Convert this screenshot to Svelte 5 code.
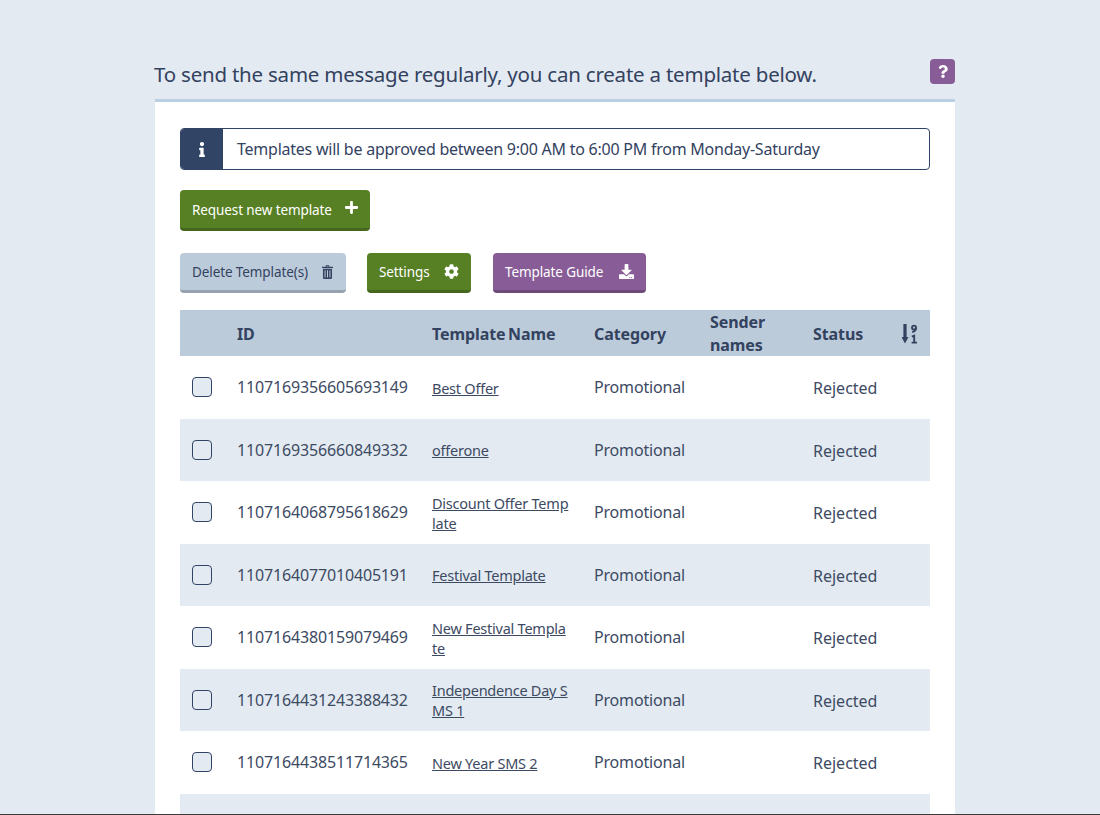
<script>
  const rows = [
    ['1107169356605693149', 'Best Offer'],
    ['1107169356660849332', 'offerone'],
    ['1107164068795618629', 'Discount Offer Template'],
    ['1107164077010405191', 'Festival Template'],
    ['1107164380159079469', 'New Festival Template'],
    ['1107164431243388432', 'Independence Day SMS 1'],
    ['1107164438511714365', 'New Year SMS 2'],
    ['', '']
  ];
</script>

<div class="page">
  <main class="main">
    <div class="wrap">
      <header class="head">
        <h1>To send the same message regularly, you can create a template below.</h1>
        <button class="help" aria-label="Help">
          <svg viewBox="0 0 384 512" width="10" height="13"><path fill="currentColor" d="M202.021 0C122.202 0 70.503 32.703 29.914 91.026c-7.363 10.58-5.093 25.086 5.178 32.874l43.138 32.709c10.373 7.865 25.132 6.026 33.253-4.148 25.049-31.381 43.63-49.449 82.757-49.449 30.764 0 68.816 19.799 68.816 49.631 0 22.552-18.617 34.134-48.993 51.164-35.423 19.86-82.299 44.576-82.299 106.405V320c0 13.255 10.745 24 24 24h72.471c13.255 0 24-10.745 24-24v-5.773c0-42.86 125.268-44.645 125.268-160.627C377.504 66.256 286.902 0 202.021 0zM192 373.459c-38.196 0-69.271 31.075-69.271 69.271 0 38.195 31.075 69.27 69.271 69.27s69.271-31.075 69.271-69.271-31.075-69.27-69.271-69.27z"/></svg>
        </button>
      </header>

      <section class="panel">
        <div class="info">
          <span class="info-icon">
            <svg viewBox="0 0 192 512" width="6" height="15"><path fill="currentColor" d="M20 424.229h20V279.771H20c-11.046 0-20-8.954-20-20V212c0-11.046 8.954-20 20-20h112c11.046 0 20 8.954 20 20v212.229h20c11.046 0 20 8.954 20 20V492c0 11.046-8.954 20-20 20H20c-11.046 0-20-8.954-20-20v-47.771c0-11.046 8.954-20 20-20zM96 0C56.235 0 24 32.235 24 72s32.235 72 72 72 72-32.235 72-72S135.764 0 96 0z"/></svg>
          </span>
          <span class="info-text">Templates will be approved between 9:00 AM to 6:00 PM from Monday-Saturday</span>
        </div>

        <div class="actions first">
          <button class="btn green request">
            <span>Request new template</span>
            <svg class="up" viewBox="0 0 448 512" width="13" height="15"><path fill="currentColor" d="M416 208H272V64c0-17.67-14.33-32-32-32h-32c-17.67 0-32 14.33-32 32v144H32c-17.67 0-32 14.33-32 32v32c0 17.67 14.33 32 32 32h144v144c0 17.67 14.33 32 32 32h32c17.67 0 32-14.33 32-32V304h144c17.67 0 32-14.33 32-32v-32c0-17.67-14.33-32-32-32z"/></svg>
          </button>
        </div>

        <div class="actions second">
          <button class="btn grey delete">
            <span>Delete Template(s)</span>
            <svg class="trash" viewBox="0 0 448 512" width="11" height="14" preserveAspectRatio="none"><path fill="currentColor" fill-rule="evenodd" d="M40 140h368v324a48 48 0 0 1-48 48H88a48 48 0 0 1-48-48zM104 190h40v270h-40zM204 190h40v270h-40zM304 190h40v270h-40zM0 64h448v50H0zM130 70L160 6h128l30 64h-50L258 46h-68l-10 24z"/></svg>
          </button>
          <button class="btn green settings">
            <span>Settings</span>
            <svg viewBox="0 0 512 512" width="15" height="15"><path fill="currentColor" d="M487.4 315.7l-42.6-24.6c4.3-23.2 4.3-47 0-70.2l42.6-24.6c4.9-2.8 7.1-8.6 5.5-14-11.1-35.6-30-67.8-54.7-94.6-3.8-4.1-10-5.1-14.8-2.3L380.8 110c-17.9-15.4-38.5-27.3-60.8-35.1V25.8c0-5.6-3.9-10.5-9.4-11.7-36.7-8.2-74.3-7.8-109.2 0-5.5 1.2-9.4 6.1-9.4 11.7V75c-22.2 7.9-42.8 19.8-60.8 35.1L88.7 85.5c-4.9-2.8-11-1.9-14.8 2.3-24.7 26.7-43.6 58.9-54.7 94.6-1.7 5.4.6 11.2 5.5 14L67.3 221c-4.3 23.2-4.3 47 0 70.2l-42.6 24.6c-4.9 2.8-7.1 8.6-5.5 14 11.1 35.6 30 67.8 54.7 94.6 3.8 4.1 10 5.1 14.8 2.3l42.6-24.6c17.9 15.4 38.5 27.3 60.8 35.1v49.2c0 5.6 3.9 10.5 9.4 11.7 36.7 8.2 74.3 7.8 109.2 0 5.5-1.2 9.4-6.1 9.4-11.7v-49.2c22.2-7.9 42.8-19.8 60.8-35.1l42.6 24.6c4.9 2.8 11 1.9 14.8-2.3 24.7-26.7 43.6-58.9 54.7-94.6 1.5-5.5-.7-11.3-5.6-14.1zM256 336c-44.1 0-80-35.9-80-80s35.9-80 80-80 80 35.9 80 80-35.9 80-80 80z"/></svg>
          </button>
          <button class="btn purple guide">
            <span>Template Guide</span>
            <svg viewBox="0 0 512 512" width="15" height="15"><path fill="currentColor" d="M216 0h80c13.3 0 24 10.7 24 24v168h87.7c17.8 0 26.7 21.5 14.1 34.1L269.7 378.3c-7.5 7.5-19.8 7.5-27.3 0L90.1 226.1c-12.6-12.6-3.7-34.1 14.1-34.1H192V24c0-13.3 10.7-24 24-24zm296 376v112c0 13.3-10.7 24-24 24H24c-13.3 0-24-10.7-24-24V376c0-13.3 10.7-24 24-24h146.7l49 49c20.1 20.1 52.5 20.1 72.6 0l49-49H488c13.3 0 24 10.7 24 24zm-124 88c0-11-9-20-20-20s-20 9-20 20 9 20 20 20 20-9 20-20zm64 0c0-11-9-20-20-20s-20 9-20 20 9 20 20 20 20-9 20-20z"/></svg>
          </button>
        </div>

        <table class="table">
          <colgroup>
            <col class="c-check" /><col class="c-id" /><col class="c-name" /><col class="c-cat" /><col class="c-send" /><col class="c-status" />
          </colgroup>
          <thead>
            <tr>
              <th></th>
              <th><div class="th-in">ID</div></th>
              <th><div class="th-in">Template Name</div></th>
              <th><div class="th-in">Category</div></th>
              <th><div class="th-in">Sender names</div></th>
              <th>
                <div class="th-in status-head">
                  <span>Status</span>
                  <svg viewBox="0 0 16 20" width="16" height="20">
                    <path fill="currentColor" d="M1.4 0h3.2v13h1.9L3 19.5-.5 13h1.9z"/>
                    <g fill="none" stroke="currentColor" stroke-width="1.9">
                      <circle cx="12" cy="3.6" r="2"/>
                      <path d="M14 4C14 6.3 12.6 7.5 10.2 8"/>
                      <path d="M9.8 12.6L12.2 11.6V18.4M9.6 18.6H15"/>
                    </g>
                  </svg>
                </div>
              </th>
            </tr>
          </thead>
          <tbody>
            {#each rows as [id, name]}
              <tr>
                <td>{#if id}<input type="checkbox" class="check" aria-label="Select template" />{/if}</td>
                <td class="id">{id}</td>
                <td class="name">{#if name}<a href="#top">{name}</a>{/if}</td>
                <td class="cat">{id ? 'Promotional' : ''}</td>
                <td></td>
                <td class="status">{id ? 'Rejected' : ''}</td>
              </tr>
            {/each}
          </tbody>
        </table>
      </section>
    </div>
  </main>
  <footer class="foot"></footer>
</div>

<style>
  :global(body) {
    margin: 0;
    background: #e3eaf1;
    font-family: "Noto Sans", "Open Sans", sans-serif;
    color: #33425f;
  }
  .page {
    height: 815px;
    display: flex;
    flex-direction: column;
    overflow: hidden;
  }
  .main {
    flex: 1;
    min-height: 0;
    overflow: hidden;
    display: flex;
    justify-content: center;
    padding: 59px 0 0 10px;
  }
  .wrap { width: 800px; }
  .foot { height: 1px; background: #3d3a3a; flex: none; }
  .head {
    display: flex;
    justify-content: space-between;
    align-items: flex-start;
    height: 40px;
    border-bottom: 3px solid #b9cfe2;
  }
  h1 {
    margin: 0 0 0 -1px;
    font-size: 20.5px;
    line-height: 30px;
    font-weight: 400;
    letter-spacing: -0.22px;
    color: #33425f;
  }
  .help {
    width: 25px;
    height: 25px;
    padding: 0;
    border: 0;
    border-radius: 4px;
    background: #885c96;
    color: #fff;
    display: flex;
    align-items: center;
    justify-content: center;
  }
  .panel {
    background: #fff;
    padding: 26px 25px 0;
    height: 800px;
  }
  .info {
    display: flex;
    height: 42px;
    box-sizing: border-box;
    border: 1px solid #324466;
    border-radius: 4px;
    overflow: hidden;
  }
  .info-icon {
    width: 42px;
    background: #324466;
    color: #fff;
    display: flex;
    align-items: center;
    justify-content: center;
    flex: none;
  }
  .info-text {
    padding-left: 14px;
    font-size: 16px;
    line-height: 40px;
    letter-spacing: -0.24px;
    color: #33425f;
  }
  .actions { display: flex; }
  .first { margin-top: 20px; }
  .second { margin-top: 22px; }
  .btn {
    box-sizing: border-box;
    display: flex;
    align-items: center;
    justify-content: space-between;
    padding: 0 12px;
    border: 0;
    border-bottom: 3px solid;
    border-radius: 4px;
    font: inherit;
    font-size: 13.5px;
    letter-spacing: -0.1px;
    height: 40px;
    white-space: nowrap;
  }
  .green { background: #578024; border-color: #45661d; color: #fff; }
  .grey { background: #bccbda; border-color: #96a2ae; color: #33425f; }
  .purple { background: #885c96; border-color: #6d4a78; color: #fff; }
  .request { width: 190px; height: 41px; }
  .request span { padding-top: 2px; }
  .up { margin-top: -3px; }
  .trash { margin-right: 1px; }
  .delete { width: 166px; }
  .settings { width: 104px; margin-left: 21px; }
  .guide { width: 153px; margin-left: 22px; }
  .table {
    margin-top: 17px;
    width: 750px;
    table-layout: fixed;
    border-collapse: collapse;
  }
  .c-check { width: 45px; }
  .c-id { width: 195px; }
  .c-name { width: 162px; }
  .c-cat { width: 116px; }
  .c-send { width: 103px; }
  .c-status { width: 129px; }
  th {
    height: 46px;
    padding: 0 12px;
    box-sizing: border-box;
    background: #bccbda;
    text-align: left;
    font-size: 16px;
    line-height: 23px;
    font-weight: 700;
    letter-spacing: -0.1px;
    word-spacing: -1.5px;
    color: #33425f;
  }
  .th-in { margin: 1px 0 -1px; }
  .status-head {
    display: flex;
    justify-content: space-between;
    align-items: center;
  }
  td {
    height: 62.5px;
    padding: 0 12px;
    font-size: 16px;
    line-height: 20px;
    color: #3d4a63;
    box-sizing: border-box;
  }
  tbody tr:nth-child(even) td { background: #e3eaf1; }
  .id { letter-spacing: -0.16px; }
  .cat { letter-spacing: -0.18px; }
  .status { padding-top: 2px; }
  .name { padding-top: 1px; font-size: 14.5px; word-break: break-all; letter-spacing: -0.24px; }
  .name a { color: #3d4a63; }
  .check {
    appearance: none;
    display: block;
    width: 20px;
    height: 20px;
    margin: 0;
    box-sizing: border-box;
    background: #e3eaf1;
    border: 1px solid #324466;
    border-radius: 4px;
  }
</style>
